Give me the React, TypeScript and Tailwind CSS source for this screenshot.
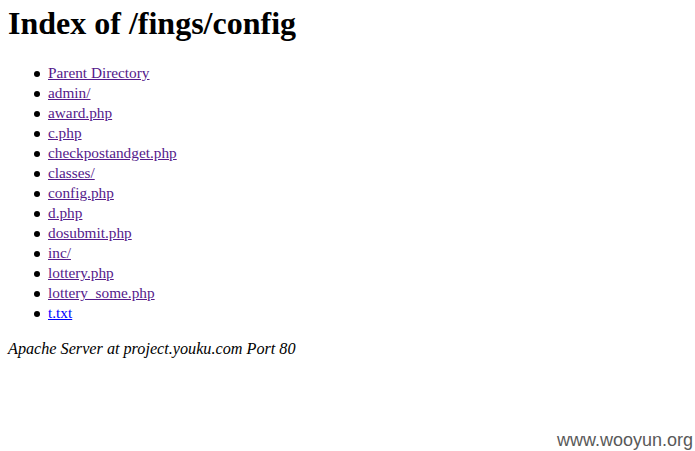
export default function App() {
  const items = [
    "Parent Directory",
    "admin/",
    "award.php",
    "c.php",
    "checkpostandget.php",
    "classes/",
    "config.php",
    "d.php",
    "dosubmit.php",
    "inc/",
    "lottery.php",
    "lottery_some.php",
    "t.txt",
  ];
  return (
    <div className="relative w-[695px] h-[451px] bg-white overflow-hidden text-black" style={{ fontFamily: '"Liberation Serif", "Times New Roman", serif' }}>
      <div className="px-2 pt-[5px]">
        <h1 className="text-[32px] leading-[36px] font-bold m-0">Index of /fings/config</h1>
        <ul className="mt-[22px] pl-10 list-none text-[15.3px] leading-[20px]">
          {items.map((it) => (
            <li key={it} className="relative">
              <span className="absolute left-[-14px] top-[8px] w-[6px] h-[6px] rounded-full bg-black" />
              <a href="#" className={`underline ${it === "t.txt" ? "text-[#0000ff]" : "text-[#551a8b]"}`}>{it}</a>
            </li>
          ))}
        </ul>
        <address className="mt-[16px] italic text-[16.2px] leading-[20px]">Apache Server at project.youku.com Port 80</address>
      </div>
      <div className="absolute right-[2px] bottom-[-1px] text-[18px] leading-[24px] text-[#595959]" style={{ fontFamily: '"Liberation Sans", Arial, sans-serif' }}>www.wooyun.org</div>
    </div>
  );
}
